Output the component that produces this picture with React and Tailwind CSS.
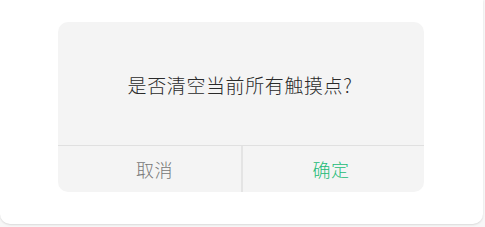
export default function App() {
  return (
    <div className="w-[485px] h-[227px] bg-[#f7f7f7] overflow-hidden" style={{ fontFamily: '"Noto Sans CJK SC", "Noto Sans", sans-serif' }}>
      <div className="w-[483px] h-[224px] bg-white rounded-b-[10px] shadow-[0_1px_2px_rgba(0,0,0,0.12)] pt-[22px] pl-[58px]">
        <div className="w-[366px] h-[170px] bg-[#f4f4f4] rounded-[10px] flex flex-col overflow-hidden">
          <div className="h-[123px] flex items-center justify-center text-[19px] font-light text-[#2a2a2a] tracking-[0.6px] pt-[4px] pr-[2px]">
            是否清空当前所有触摸点?
          </div>
          <div className="h-px bg-[#e0e0e0]" />
          <div className="flex-1 flex">
            <div className="w-[183px] flex items-center justify-center text-[18px] font-light text-[#777777] pl-[10px] tracking-[0.5px]">
              取消
            </div>
            <div className="w-[2px] bg-[#e4e4e4]" />
            <div className="flex-1 flex items-center justify-center text-[18px] font-light text-[#22bb77] pr-[5px] tracking-[0.5px]">
              确定
            </div>
          </div>
        </div>
      </div>
    </div>
  );
}
